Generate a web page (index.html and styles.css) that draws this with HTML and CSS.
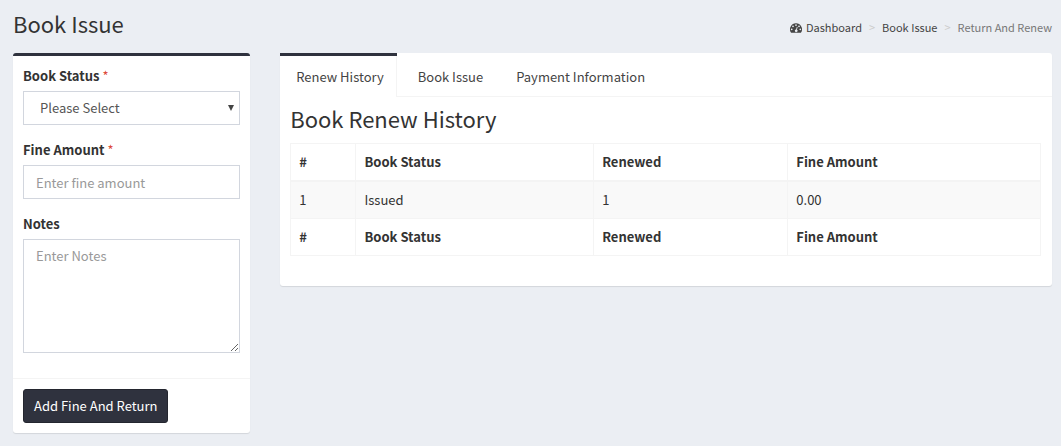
FILE: index.html
```html
<!DOCTYPE html>
<html lang="en">
<head>
  <meta charset="UTF-8">
  <meta name="viewport" content="width=device-width, initial-scale=1.0">
  <title>Book Issue</title>
  <link rel="stylesheet" href="styles.css">
</head>
<body>
  <header class="content-header">
    <h1>Book Issue</h1>
    <nav aria-label="Breadcrumb">
      <ol class="breadcrumb">
        <li>
          <a href="#">
            <svg class="icon-dashboard" viewBox="0 0 14 12" aria-hidden="true">
              <path fill="currentColor" fill-rule="evenodd" d="M7 0a7 7 0 0 0-5.900 10.770c.1.150.25.230.42.230h10.960c.17 0 .32-.080.42-.230A7 7 0 0 0 7 0zM2 6a1 1 0 1 1 0 2 1 1 0 0 1 0-2zM3.500 2.500a1 1 0 1 1 0 2 1 1 0 0 1 0-2zM7 1a1 1 0 1 1 0 2 1 1 0 0 1 0-2zM10.500 2.500a1 1 0 1 1 0 2 1 1 0 0 1 0-2zM12 6a1 1 0 1 1 0 2 1 1 0 0 1 0-2zM8 4l.9.250-.8 3.100a1.500 1.500 0 1 1-.95-.250z"/>
            </svg>
            Dashboard
          </a>
        </li>
        <li><a href="#">Book Issue</a></li>
        <li class="active" aria-current="page">Return And Renew</li>
      </ol>
    </nav>
  </header>

  <main class="row">
    <div class="col-form">
      <form class="box">
        <div class="box-body">
          <div class="form-group">
            <label for="book-status">Book Status <span class="required">*</span></label>
            <div class="select-wrap">
              <select class="form-control" id="book-status">
                <option>Please Select</option>
              </select>
            </div>
          </div>
          <div class="form-group">
            <label for="fine-amount">Fine Amount <span class="required">*</span></label>
            <input class="form-control" type="text" id="fine-amount" placeholder="Enter fine amount">
          </div>
          <div class="form-group">
            <label for="notes">Notes</label>
            <textarea class="form-control" id="notes" placeholder="Enter Notes"></textarea>
          </div>
        </div>
        <div class="box-footer">
          <button type="button" class="btn">Add Fine And Return</button>
        </div>
      </form>
    </div>

    <div class="col-tabs">
      <section class="tabs-box">
        <ul class="nav-tabs">
          <li class="active"><a href="#renew-history">Renew History</a></li>
          <li><a href="#book-issue">Book Issue</a></li>
          <li><a href="#payment">Payment Information</a></li>
        </ul>
        <div class="tab-content" id="renew-history">
          <h2>Book Renew History</h2>
          <table class="table">
            <colgroup>
              <col class="col-number">
              <col class="col-status">
              <col class="col-renewed">
              <col>
            </colgroup>
            <thead>
              <tr>
                <th>#</th>
                <th>Book Status</th>
                <th>Renewed</th>
                <th>Fine Amount</th>
              </tr>
            </thead>
            <tbody>
              <tr>
                <td>1</td>
                <td>Issued</td>
                <td>1</td>
                <td>0.00</td>
              </tr>
            </tbody>
            <tfoot>
              <tr>
                <th>#</th>
                <th>Book Status</th>
                <th>Renewed</th>
                <th>Fine Amount</th>
              </tr>
            </tfoot>
          </table>
        </div>
      </section>
    </div>
  </main>
</body>
</html>
```
FILE: styles.css
```css
* {
  box-sizing: border-box;
}

body {
  margin: 0;
  padding: 0 9px 12px 13px;
  background: #ebeef3;
  color: #333;
  font-family: "Source Sans Pro", "Noto Sans CJK SC", sans-serif;
  font-size: 13px;
  line-height: 20px;
}

h1,
h2 {
  margin: 0;
  font-size: 22px;
  font-weight: 400;
  line-height: 26px;
}

a {
  color: #444;
  text-decoration: none;
}

.content-header {
  display: flex;
  justify-content: space-between;
  align-items: flex-start;
  padding: 10px 0 16px;
}

.breadcrumb {
  display: flex;
  margin: 0;
  padding: 7px 0 0;
  list-style: none;
  font-size: 11px;
}

.breadcrumb li + li::before {
  content: ">";
  padding: 0 7px;
  color: #ccc;
}

.breadcrumb .active {
  color: #777;
}

.icon-dashboard {
  width: 12px;
  height: 11px;
  margin-right: 1px;
  vertical-align: -2px;
}

.row {
  display: flex;
  align-items: flex-start;
  margin: 0 -15px;
}

.col-form {
  width: 25%;
  padding: 0 15px;
}

.col-tabs {
  width: 75%;
  padding: 0 15px;
}

.box,
.tabs-box {
  background: #fff;
  border-radius: 3px;
  box-shadow: 0 1px 1px rgba(0, 0, 0, 0.1);
}

.box {
  border-top: 3px solid #2f323e;
}

.box-body {
  padding: 10px 10px 25px;
}

.form-group + .form-group {
  margin-top: 15px;
}

label {
  display: block;
  margin-bottom: 5px;
  font-weight: 700;
}

.required {
  color: #dd4b39;
  font-weight: 400;
}

.form-control {
  display: block;
  width: 100%;
  height: 34px;
  margin: 0;
  padding: 6px 12px;
  border: 1px solid #d2d6de;
  border-radius: 0;
  background: #fff;
  color: #555;
  font: inherit;
}

.form-control::placeholder {
  color: #999;
}

.form-control:focus {
  outline: none;
  border-color: #2f323e;
}

.select-wrap {
  position: relative;
}

.select-wrap::after {
  content: "";
  position: absolute;
  top: 14px;
  right: 6px;
  border: 3px solid transparent;
  border-top: 6px solid #444;
  border-bottom: 0;
  pointer-events: none;
}

select.form-control {
  padding: 6px 16px;
  appearance: none;
}

textarea.form-control {
  height: 114px;
  resize: vertical;
}

.box-footer {
  padding: 10px;
  border-top: 1px solid #f4f4f4;
}

.btn {
  height: 34px;
  padding: 6px 10px;
  border: 1px solid #24262f;
  border-radius: 3px;
  background: #2f323e;
  color: #fff;
  font: inherit;
  cursor: pointer;
}

.nav-tabs {
  display: flex;
  margin: 0;
  padding: 0;
  border-bottom: 1px solid #f4f4f4;
  list-style: none;
}

.nav-tabs li {
  margin: 0 5px -1px 0;
  border-top: 3px solid transparent;
}

.nav-tabs a {
  display: block;
  padding: 11px 12px 10px 16px;
}

.nav-tabs .active {
  border-top-color: #2f323e;
}

.nav-tabs .active a {
  border-right: 1px solid #f4f4f4;
  background: #fff;
}

.tab-content {
  padding: 8px 11px 30px 10px;
}

.table {
  width: 100%;
  margin-top: 12px;
  border-collapse: collapse;
  table-layout: fixed;
}

.table th,
.table td {
  padding: 8px;
  border: 1px solid #f4f4f4;
  text-align: left;
}

.table thead th {
  border-bottom-width: 2px;
}

.table tbody tr {
  background: #f9f9f9;
}

.col-number {
  width: 8.7%;
}

.col-status {
  width: 31.7%;
}

.col-renewed {
  width: 25.9%;
}
```
